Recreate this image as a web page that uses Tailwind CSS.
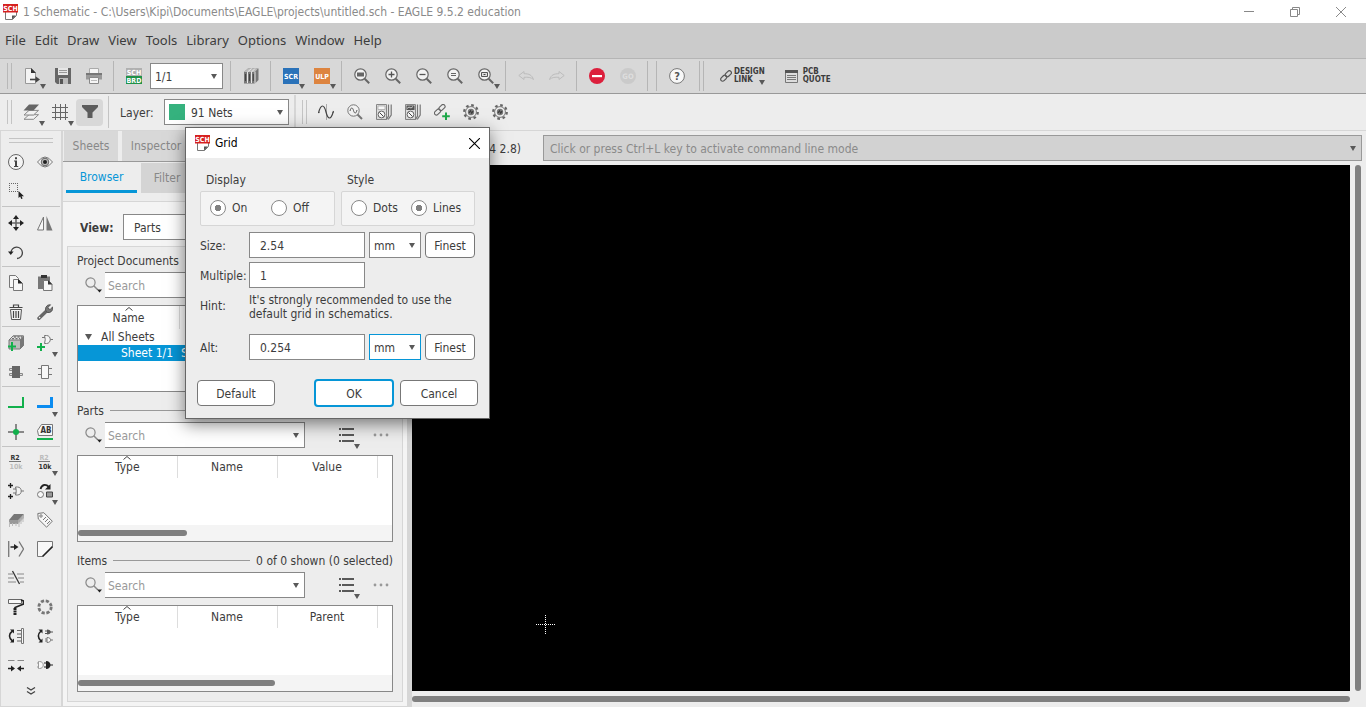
<!DOCTYPE html>
<html lang="en">
<head>
<meta charset="utf-8">
<title>1 Schematic - EAGLE 9.5.2 education</title>
<script src="https://cdn.jsdelivr.net/npm/@tailwindcss/browser@4"></script>
</head>
<body class="flex min-h-screen flex-col bg-white pb-[3px] font-['DejaVu_Sans_Condensed','DejaVu_Sans',sans-serif] text-xs text-[#3c3c3c]">

<!-- Icon library -->
<svg class="hidden" aria-hidden="true">
  <symbol id="arrow" viewBox="0 0 6 5"><path d="M0 0h6L3 5z" fill="#595959"/></symbol>
  <symbol id="sch" viewBox="0 0 16 16"><path d="M2.500 8v7.500h7l4-4V8" fill="#fff" stroke="#777"/><path d="M9 15.500v-4h4z" fill="#555"/><path d="M0 0h15v8.500H0z" fill="#d6201f"/><text x="7.500" y="6.800" text-anchor="middle" font-size="7" font-weight="bold" fill="#fff" font-family="DejaVu Sans Condensed">SCH</text></symbol>
  <symbol id="open" viewBox="0 0 16 16"><path d="M1.500.5h6l4 4v11h-10z" fill="#f4f4f4" stroke="#999"/><path d="M7 0v5h5z" fill="#333"/><path d="M6 11.500h7" fill="none" stroke="#444" stroke-width="1.600"/><path d="M11.500 8.300l4.500 3.200-4.500 3.200z" fill="#444"/></symbol>
  <symbol id="save" viewBox="0 0 16 16"><path d="M0 0h16v16H2l-2-2z" fill="#666"/><path d="M3 0h10v7H3z" fill="#e6e6e6"/><path d="M4 2.500h8M4 4.500h8" stroke="#999"/><path d="M4 10h9v6H4z" fill="#bbb"/><path d="M5 11h3v5H5z" fill="#555"/></symbol>
  <symbol id="print" viewBox="0 0 16 16"><path d="M3.500.5h9V6h-9z" fill="#f5f5f5" stroke="#aaa"/><path d="M0 5h16v6.500H0z" fill="#999"/><path d="M0 5h16v2H0z" fill="#777"/><path d="M3.500 9.500h9v6h-9z" fill="#f5f5f5" stroke="#888"/><path d="M5 12.500h6" stroke="#bbb"/></symbol>
  <symbol id="brd" viewBox="0 0 16 16"><path d="M0 0h16v8H0z" fill="#b0b0b0"/><path d="M0 8h16v8H0z" fill="#1f9248"/><g font-size="7" fill="#fff" text-anchor="middle" font-weight="bold" font-family="DejaVu Sans Condensed"><text x="8" y="6.800">SCH</text><text x="8" y="14.800">BRD</text></g></symbol>
  <symbol id="books" viewBox="0 0 16 16"><path d="M1 4l4-3.500h10.500V12L12 15.500H1z" fill="#777"/><path d="M1 4l4-3.500h10L12 4z" fill="#bbb"/><path d="M4.500 4v11M8.500 4v11M12 4v11.500M4.500 4l4-3.500M8.500 4l3.500-3.500" stroke="#e8e8e8"/><path d="M2.500 6v7M6.500 6v7M10.300 6v7" stroke="#444"/></symbol>
  <symbol id="scr" viewBox="0 0 16 16"><path d="M0 0h16v16H0z" fill="#2a72b9"/><text x="8" y="10.700" text-anchor="middle" font-size="7" font-weight="bold" fill="#fff" font-family="DejaVu Sans Condensed">SCR</text></symbol>
  <symbol id="ulp" viewBox="0 0 16 16"><path d="M0 0h16v16H0z" fill="#dd843f"/><text x="8" y="10.700" text-anchor="middle" font-size="7" font-weight="bold" fill="#fff" font-family="DejaVu Sans Condensed">ULP</text></symbol>
  <symbol id="lens" viewBox="0 0 16 16"><circle cx="6.500" cy="6.500" r="5.700" fill="#f2f2f2" stroke="#666" stroke-width="1.200"/><path d="M10.700 10.700l4.500 4.500" stroke="#666" stroke-width="2"/></symbol>
  <symbol id="undo" viewBox="0 0 16 16"><path d="M.8 7.500L6 3.500v2.200c5 0 8 1.300 9.500 5.800C13 9.300 10 9 6 9.300v2.200z" fill="none" stroke="#bcbcbc"/></symbol>
  <symbol id="stop" viewBox="0 0 16 16"><circle cx="8" cy="8" r="8" fill="#dc1f3c"/><path d="M3 7h10v2.200H3z" fill="#fff"/></symbol>
  <symbol id="go" viewBox="0 0 16 16"><circle cx="8" cy="8" r="8" fill="#cacaca"/><text x="8" y="10.700" text-anchor="middle" font-size="7.500" fill="#dedede" font-weight="bold" font-family="DejaVu Sans Condensed">GO</text></symbol>
  <symbol id="help" viewBox="0 0 16 16"><circle cx="8" cy="8" r="7.400" fill="#f8f8f8" stroke="#777"/><text x="8" y="12.200" text-anchor="middle" font-size="11" font-weight="bold" fill="#555" font-family="DejaVu Sans Condensed">?</text></symbol>
  <symbol id="link" viewBox="0 0 12 12"><g fill="none" stroke="#555" stroke-width="1.200"><rect x="4.800" y="1.800" width="7" height="4" rx="2" transform="rotate(-45 8.300 3.800)"/><rect x=".2" y="6.200" width="7" height="4" rx="2" transform="rotate(-45 3.700 8.200)"/></g></symbol>
  <symbol id="quote" viewBox="0 0 13 13"><path d="M.5.5h12v12H.5z" fill="#ddd" stroke="#777"/><path d="M0 0h13v3H0z" fill="#555"/><path d="M2 5.500h9M2 7.500h9M2 9.500h9" stroke="#777"/></symbol>
  <symbol id="layers" viewBox="0 0 16 16"><g fill="#f2f2f2" stroke="#888"><path d="M1 15.300l5-4.600h9.500l-5 4.600z"/><path d="M1 11l5-4.600h9.500l-5 4.600z"/></g><path d="M.5 6.500l5.500-6h10l-5.500 6z" fill="#666"/></symbol>
  <symbol id="grid" viewBox="0 0 16 16"><path d="M3.500 0v16M8.500 0v16M13.500 0v16M0 3.500h16M0 8.500h16M0 13.500h16" stroke="#666"/></symbol>
  <symbol id="funnel" viewBox="0 0 16 16"><path d="M0 1h16v2l-5.500 5.500V14h-5V8.500L0 3z" fill="#5c5c5c"/></symbol>
  <symbol id="wave" viewBox="0 0 16 16"><path d="M8.500 0v16M0 8.500h2M14 8.500h2" stroke="#aaa"/><path d="M.5 9C2 3 3 2 4.500 2c4 0 3 12 7 12 1.500 0 2.500-1.500 4-7" fill="none" stroke="#444" stroke-width="1.200"/></symbol>
  <symbol id="probe" viewBox="0 0 16 16"><circle cx="6.500" cy="6.500" r="5.700" fill="#f2f2f2" stroke="#777"/><path d="M10.500 10.500l4.500 4.500" stroke="#777" stroke-width="2"/><path d="M3 7c1-4 2.500-4 3.500-.5s2.500 3.500 3.500-.5" fill="none" stroke="#555"/></symbol>
  <symbol id="meter" viewBox="0 0 16 16"><path d="M.5.5h10v15H.5z" fill="#ddd" stroke="#888"/><path d="M2 2h7v3.500H2z" fill="#f8f8f8" stroke="#999" stroke-width=".6"/><circle cx="5.500" cy="10.500" r="3.400" fill="#f8f8f8" stroke="#666"/><path d="M3.500 8.500l4 4" stroke="#444"/><path d="M12.500.5V12l-2 3.500M15.200.5V11l-3 4.500" fill="none" stroke="#777" stroke-width="1.200"/></symbol>
  <symbol id="meter2" viewBox="0 0 16 16"><use href="#meter"/><path d="M1.500 1.500h8V6h-8z" fill="#555"/><path d="M2 4.500l2-1.500 2 1 2-1.500" stroke="#ccc" fill="none"/></symbol>
  <symbol id="linkadd" viewBox="0 0 16 16"><g fill="none" stroke="#666" stroke-width="1.100"><rect x="4.500" y="1.500" width="7" height="4" rx="2" transform="rotate(-45 8 3.500)"/><rect x="0" y="6" width="7" height="4" rx="2" transform="rotate(-45 3.500 8)"/></g><path d="M12 8.500V16M8.200 12.300h7.600" stroke="#1faa4b" stroke-width="2"/></symbol>
  <symbol id="gear" viewBox="0 0 16 16"><circle cx="8" cy="8" r="6.700" fill="none" stroke="#666" stroke-width="2.400" stroke-dasharray="2.600 2.660"/><circle cx="8" cy="8" r="5.400" fill="#eee" stroke="#777"/><circle cx="8" cy="8" r="3.200" fill="#777"/><path d="M6 9l1.500-2.500 1.200 3L10 7" stroke="#333" fill="none"/></symbol>

  <symbol id="info" viewBox="0 0 16 16"><circle cx="8" cy="8" r="7.500" fill="#f4f4f4" stroke="#666"/><path d="M7 3.200h2v2H7zM6 6.500h3V12h1.200v1H6v-1h1V7.500H6z" fill="#444"/></symbol>
  <symbol id="eye" viewBox="0 0 16 16"><path d="M.5 8Q8-2 15.500 8 8 18 .5 8z" fill="#f4f4f4" stroke="#777"/><circle cx="8" cy="8" r="3.800" fill="#bbb" stroke="#666"/><circle cx="8" cy="8" r="2" fill="#222"/></symbol>
  <symbol id="group" viewBox="0 0 16 16"><path d="M1 .5h9M1 8.500h9M1.500 0v9M9.500 0v9" stroke="#666" stroke-dasharray="1 1"/><path d="M10.500 8v7l1.700-1.400 1 2.400 1.400-.6-1-2.200H16z" fill="#222"/></symbol>
  <symbol id="move" viewBox="0 0 16 16"><path d="M8 2v12M2 8h12" stroke="#666" stroke-width="1.600"/><path d="M8 0l3 4H5zM8 16l3-4H5zM0 8l4-3v6zM16 8l-4-3v6z" fill="#222"/></symbol>
  <symbol id="mirror" viewBox="0 0 16 16"><path d="M6.500 2v13h-6z" fill="#f6f6f6" stroke="#777"/><path d="M9.500 1l6 14.500h-6z" fill="#777"/></symbol>
  <symbol id="rotate" viewBox="0 0 16 16"><path d="M3 9a5.700 5.700 0 1 1 6 5.500" fill="none" stroke="#444" stroke-width="1.300"/><path d="M0 7.500h5.600L2.800 11z" fill="#222"/></symbol>
  <symbol id="copy" viewBox="0 0 16 16"><g fill="#f6f6f6" stroke="#777"><path d="M1.500.5h6l3 3v9h-9z"/><path d="M5.500 4.500h5l4 4v7h-9z"/></g><path d="M10 4v4.500h4.800z" fill="#222"/></symbol>
  <symbol id="paste" viewBox="0 0 16 16"><path d="M1 1.500h12V14H1z" fill="#777"/><path d="M4 0h6v3H4z" fill="#333"/><path d="M6.500 5.500h5l3.500 4v6H6.500z" fill="#f6f6f6" stroke="#777"/><path d="M11 5v4.500h4.500z" fill="#333"/></symbol>
  <symbol id="trash" viewBox="0 0 16 16"><path d="M2.500 5.500h11l-1 10h-9z" fill="#f4f4f4" stroke="#555"/><path d="M1.500 3.500h13M5.500 3V1h5v2M5.500 7v7M8 7v7M10.500 7v7" stroke="#444" fill="none" stroke-width="1.200"/></symbol>
  <symbol id="wrench" viewBox="0 0 16 16"><path d="M2 14.200l7-6.700" stroke="#666" stroke-width="3.400" stroke-linecap="round"/><path d="M13.500.8L11 3.300l.5 1.700 1.700.4 2.400-2.400A4.300 4.300 0 0 1 10 8.300 4.300 4.300 0 0 1 13.500.8z" fill="#777" stroke="#555"/><circle cx="2.600" cy="13.600" r=".8" fill="#eee"/></symbol>
  <symbol id="addpart" viewBox="0 0 16 16"><path d="M1 5l4-4h10.500v9.500L12 14H1z" fill="#bdbdbd" stroke="#777"/><path d="M12 5l3.500-4v9.500L12 14z" fill="#777"/><path d="M1 5l4-4h10.500L12 5z" fill="#e2e2e2" stroke="#777"/><path d="M4 3.700h8M6 2h8" stroke="#555" stroke-dasharray="2 1.500"/><path d="M4 7v9M0 11.500h8" stroke="#12b04c" stroke-width="2"/></symbol>
  <symbol id="addgate" viewBox="0 0 16 16"><path d="M7.500.5h2c5 0 5 8 0 8h-2q1.500-4 0-8zM5 2.500h3M13.300 4.500H16" fill="#f4f4f4" stroke="#777"/><path d="M4 8v8M0 12h8" stroke="#12b04c" stroke-width="2"/></symbol>
  <symbol id="chipdark" viewBox="0 0 16 16"><path d="M1.500 4.500h3v2h-3zM1.500 9.500h3v2h-3zM11.500 9.500h3v2h-3z" fill="#ddd" stroke="#888"/><path d="M4 2h8v12H4z" fill="#666"/></symbol>
  <symbol id="chip" viewBox="0 0 16 16"><path d="M1 4.500h3M1 10.500h3M12 4.500h3M12 10.500h3" stroke="#777"/><path d="M4.500 1.500h7v13h-7z" fill="#f8f8f8" stroke="#777"/></symbol>
  <symbol id="net" viewBox="0 0 16 16"><path d="M0 12h15V2" fill="none" stroke="#12b04c" stroke-width="2"/></symbol>
  <symbol id="bus" viewBox="0 0 16 16"><path d="M0 11.500h14.500V2" fill="none" stroke="#0b8cf0" stroke-width="3"/></symbol>
  <symbol id="junction" viewBox="0 0 16 16"><path d="M8 0v16M0 8h16" stroke="#888" stroke-width="2"/><circle cx="8" cy="8" r="3" fill="#12b04c"/></symbol>
  <symbol id="label" viewBox="0 0 16 16"><path d="M.5 6.500l4-6h11v11h-14z" fill="#f8f8f8" stroke="#777"/><path d="M0 15h16" stroke="#12b04c" stroke-width="2"/><text x="9" y="8.800" text-anchor="middle" font-size="8" font-weight="bold" fill="#333" font-family="DejaVu Sans Condensed">AB</text></symbol>
  <symbol id="gateadd" viewBox="0 0 16 16"><path d="M2.500 0v5M0 2.500h5M2.500 11v5M0 13.500h5" stroke="#222" stroke-width="1.300"/><path d="M7.500 4h2c5 0 5 8 0 8h-2q1.500-4 0-8zM5 6h3.500M5 10h3.500M13.300 8H16" fill="#f4f4f4" stroke="#777"/></symbol>
  <symbol id="replace" viewBox="0 0 16 16"><path d="M3.500 6C5 1 9 1 12 4" fill="none" stroke="#222" stroke-width="1.800"/><path d="M13.500 1v5.500H8z" fill="#222"/><circle cx="3.500" cy="11.500" r="3" fill="#f8f8f8" stroke="#777"/><path d="M9.500 9h6v5h-6z" fill="#999" stroke="#444"/></symbol>
  <symbol id="ic" viewBox="0 0 16 16"><path d="M1 8l5-6h10l-5 6z" fill="#777"/><path d="M1 8h9v4H1z" fill="#999"/><path d="M10 8l6-6v4l-6 6z" fill="#aaa"/><path d="M1.500 10v5M4.500 11v3M8 11v3M11 10v5M13 7v5M15 4v6" stroke="#bbb"/></symbol>
  <symbol id="tag" viewBox="0 0 16 16"><path d="M.8 1.500l6-.8 8.500 8.500-5.700 6L1.300 7z" fill="#f6f6f6" stroke="#777"/><circle cx="4" cy="4" r="1.200" fill="none" stroke="#777"/><path d="M6 8l3-3M8 10l3-3M10 12l3-3" stroke="#777"/></symbol>
  <symbol id="split" viewBox="0 0 16 16"><path d="M.7 0v16" stroke="#777" stroke-width="1.300"/><path d="M2.500 6h4" stroke="#333" stroke-width="1.600"/><path d="M6 3l4.500 3L6 9z" fill="#222"/><path d="M11 .5L15.500 8 11 15.500" fill="none" stroke="#777" stroke-width="1.300"/></symbol>
  <symbol id="miter" viewBox="0 0 16 16"><path d="M.5.5h15v5l-10 10h-5z" fill="#f8f8f8" stroke="#777"/><path d="M15.500 5.500l-10 10" stroke="#222" stroke-width="1.600"/></symbol>
  <symbol id="cut" viewBox="0 0 16 16"><path d="M0 4h5M9 4h7M0 8h6M10 8h6M0 12h8M12 12h4" stroke="#888"/><path d="M4.500 1l7 13" stroke="#333" stroke-width="1.300"/></symbol>
  <symbol id="paint" viewBox="0 0 16 16"><path d="M.5.500h13v4H.5z" fill="#f8f8f8" stroke="#666"/><path d="M13 1l2.500 1v3L7 8.500V10" fill="none" stroke="#222" stroke-width="1.600"/><path d="M7 9v7" stroke="#222" stroke-width="3" stroke-dasharray="2 .5"/></symbol>
  <symbol id="ring" viewBox="0 0 16 16"><circle cx="8" cy="8" r="6.200" fill="none" stroke="#777" stroke-width="2.800" stroke-dasharray="3.200 1.670"/></symbol>
  <symbol id="pinswap" viewBox="0 0 16 16"><path d="M4.500 3C.5 6 .5 10 4.500 13" fill="none" stroke="#222" stroke-width="1.600"/><path d="M2 1.500h4v4zM2 14.500h4v-4z" fill="#222"/><path d="M9 2.500h4M9 6h4M9 9.500h4M9 13h4" stroke="#666"/><path d="M13.500.5h2v15h-2z" fill="#f8f8f8" stroke="#777"/></symbol>
  <symbol id="gateswap" viewBox="0 0 16 16"><path d="M4 3C.5 6 .5 10 4 13" fill="none" stroke="#222" stroke-width="1.600"/><path d="M1.500 1.500h4v4zM1.500 14.500h4v-4z" fill="#222"/><path d="M10 1.500c5 0 5 5 0 5z" fill="#555"/><path d="M8 3h3M8 5.500h3M13 4h3" stroke="#555"/><path d="M10 9.500c5 0 5 5 0 5zM8 11h2M8 13h2M14 12h2" fill="#f8f8f8" stroke="#777"/></symbol>
  <symbol id="gap" viewBox="0 0 16 16"><path d="M0 3.500h6.500M9.500 3.500H16" stroke="#888"/><path d="M0 11.500h4M12 11.500h4" stroke="#222" stroke-width="1.600"/><path d="M3 8.500l4 3-4 3zM13 8.500l-4 3 4 3z" fill="#222"/></symbol>
  <symbol id="invoke" viewBox="0 0 16 16"><path d="M1.500 4.500h1c5 0 5 7 0 7h-1zM0 6h2M0 10h2" fill="#f8f8f8" stroke="#999"/><path d="M9 4c6 0 6 8 0 8z" fill="#222"/><path d="M7 6h3M7 10h3M13 8h3" stroke="#222"/></symbol>
  <symbol id="more" viewBox="0 0 10 8"><path d="M1 .5l4 2.500 4-2.500M1 4.500L5 7l4-2.500" fill="none" stroke="#444" stroke-width="1.300"/></symbol>
  <symbol id="search" viewBox="0 0 18 16"><circle cx="5.500" cy="5.500" r="4.600" fill="none" stroke="#888" stroke-width="1.200"/><path d="M8.700 8.700l4 4" stroke="#888" stroke-width="1.500"/><path d="M12 12.500h5l-2.500 3z" fill="#222"/></symbol>
  <symbol id="list" viewBox="0 0 16 14"><path d="M0 1h2M3 1h12M0 7h2M3 7h12M0 13h2M3 13h12" stroke="#595959" stroke-width="2"/></symbol>
  <symbol id="dots" viewBox="0 0 16 4"><circle cx="2" cy="2" r="1.400" fill="#999"/><circle cx="8" cy="2" r="1.400" fill="#999"/><circle cx="14" cy="2" r="1.400" fill="#999"/></symbol>
  <symbol id="sortup" viewBox="0 0 8 4"><path d="M.5 3.500L4 .5l3.500 3" fill="none" stroke="#444"/></symbol>
  <symbol id="cross" viewBox="0 0 10 10"><path d="M0 0l10 10M10 0L0 10" stroke="currentColor"/></symbol>
</svg>

<!-- Title bar -->
<header class="flex h-[23px] items-center bg-white pl-[3px] text-[#8a8a8a]">
  <svg class="size-4"><use href="#sch"/></svg>
  <h1 class="ml-1 flex-1 whitespace-nowrap">1 Schematic - C:\Users\Kipi\Documents\EAGLE\projects\untitled.sch - EAGLE 9.5.2 education</h1>
  <div class="flex pr-px">
    <button class="grid h-5 w-[46px] place-items-center" aria-label="Minimize"><svg class="h-px w-2.5 bg-[#888]"></svg></button>
    <button class="grid h-5 w-[45px] place-items-center" aria-label="Restore"><svg class="size-[10px]" viewBox="0 0 10 10"><path d="M2.500 2V.5h7v7H8M.5 2.500h7v7h-7z" fill="none" stroke="#888"/></svg></button>
    <button class="grid h-5 w-[48px] place-items-center" aria-label="Close"><svg class="size-[10px]"><use href="#cross"/></svg></button>
  </div>
</header>

<!-- Menu -->
<nav class="flex h-9 items-center gap-[9px] border-b border-[#b5b5b5] bg-[#cbcbcb] pl-[5px] font-['Noto_Sans',sans-serif] text-[13px]">
  <a href="#">File</a><a href="#">Edit</a><a href="#">Draw</a><a href="#">View</a><a href="#">Tools</a><a href="#">Library</a><a href="#">Options</a><a href="#">Window</a><a href="#">Help</a>
</nav>

<!-- Main toolbar -->
<div class="flex h-[35px] items-stretch border-b border-[#999] bg-[#d8d8d8] pl-[7px]">
  <div class="my-1 mr-1 w-[5px] border-x border-[#b8b8b8]"></div>
  <button class="relative grid w-[31px] place-items-center" aria-label="Open"><svg class="size-4"><use href="#open"/></svg><svg class="absolute right-px bottom-1 h-[5px] w-1.5"><use href="#arrow"/></svg></button>
  <button class="grid w-[31px] place-items-center" aria-label="Save"><svg class="size-4"><use href="#save"/></svg></button>
  <button class="grid w-[31px] place-items-center" aria-label="Print"><svg class="size-4"><use href="#print"/></svg></button>
  <div class="mx-1 my-0.5 w-px bg-[#b5b5b5]"></div>
  <button class="grid w-[31px] place-items-center" aria-label="Switch to board"><svg class="size-4"><use href="#brd"/></svg></button>
  <div class="relative my-auto ml-px h-[26px] w-[73px]">
    <select aria-label="Sheet" class="h-full w-full appearance-none border border-[#888] bg-white pt-0.5 pl-1"><option>1/1</option></select>
    <svg class="pointer-events-none absolute top-[11px] right-1.5 h-[5px] w-1.5"><use href="#arrow"/></svg>
  </div>
  <div class="my-0.5 mr-1 ml-[7px] w-px bg-[#b5b5b5]"></div>
  <button class="grid w-[31px] place-items-center" aria-label="Library manager"><svg class="size-4"><use href="#books"/></svg></button>
  <div class="mx-1 my-0.5 w-px bg-[#b5b5b5]"></div>
  <button class="relative grid w-[31px] place-items-center" aria-label="Run script"><svg class="size-4"><use href="#scr"/></svg><svg class="absolute right-px bottom-1 h-[5px] w-1.5"><use href="#arrow"/></svg></button>
  <button class="relative grid w-[31px] place-items-center" aria-label="Run ULP"><svg class="size-4"><use href="#ulp"/></svg><svg class="absolute right-px bottom-1 h-[5px] w-1.5"><use href="#arrow"/></svg></button>
  <div class="mx-1 my-0.5 w-px bg-[#b5b5b5]"></div>
  <button class="grid w-[31px] place-items-center" aria-label="Zoom to fit"><svg class="size-4" viewBox="0 0 16 16"><use href="#lens"/><path d="M3 4.500h7v4H3z" fill="#666"/></svg></button>
  <button class="grid w-[31px] place-items-center" aria-label="Zoom in"><svg class="size-4" viewBox="0 0 16 16"><use href="#lens"/><path d="M3.500 6.500h6M6.500 3.500v6" stroke="#555" stroke-width="1.300"/></svg></button>
  <button class="grid w-[31px] place-items-center" aria-label="Zoom out"><svg class="size-4" viewBox="0 0 16 16"><use href="#lens"/><path d="M3.500 6.500h6" stroke="#555" stroke-width="1.300"/></svg></button>
  <button class="grid w-[31px] place-items-center" aria-label="Redraw"><svg class="size-4" viewBox="0 0 16 16"><use href="#lens"/><path d="M4 5.500h5M4 7.500h5" stroke="#666"/></svg></button>
  <button class="relative grid w-[31px] place-items-center" aria-label="Zoom select"><svg class="size-4" viewBox="0 0 16 16"><use href="#lens"/><path d="M3.500 4.500h6v4h-6z" fill="#ddd" stroke="#555"/><path d="M5.500 6.500h2" stroke="#444"/></svg><svg class="absolute right-px bottom-1 h-[5px] w-1.5"><use href="#arrow"/></svg></button>
  <div class="mx-1 my-0.5 w-px bg-[#b5b5b5]"></div>
  <button class="grid w-[31px] place-items-center" aria-label="Undo"><svg class="size-4"><use href="#undo"/></svg></button>
  <button class="grid w-[31px] place-items-center" aria-label="Redo"><svg class="size-4 -scale-x-100"><use href="#undo"/></svg></button>
  <div class="mx-1 my-0.5 w-px bg-[#b5b5b5]"></div>
  <button class="grid w-[31px] place-items-center" aria-label="Stop"><svg class="size-4"><use href="#stop"/></svg></button>
  <button class="grid w-[31px] place-items-center" aria-label="Go"><svg class="size-4"><use href="#go"/></svg></button>
  <div class="mx-1 my-0.5 w-2.5 border-x border-[#b5b5b5]"></div>
  <button class="grid w-[31px] place-items-center" aria-label="Help"><svg class="size-4"><use href="#help"/></svg></button>
  <div class="my-0.5 ml-[7px] w-[5px] border-x border-[#b5b5b5]"></div>
  <button class="relative ml-4 flex items-center gap-0.5 text-left text-[8px] leading-[8px] font-bold"><svg class="size-3"><use href="#link"/></svg><span class="flex flex-col"><span>DESIGN</span><span>LINK</span></span><svg class="absolute right-0 bottom-2 h-[5px] w-1.5"><use href="#arrow"/></svg></button>
  <button class="ml-5 flex items-center gap-[5px] text-left text-[8px] leading-[8px] font-bold"><svg class="size-[13px]"><use href="#quote"/></svg><span class="flex flex-col"><span>PCB</span><span>QUOTE</span></span></button>
</div>

<!-- Parameter toolbar -->
<div class="flex h-[37px] items-stretch border-b border-[#d6d6d6] bg-[#ededed] pl-[7px]">
  <div class="my-1.5 mr-1 w-[5px] border-x border-[#c4c4c4]"></div>
  <button class="relative grid w-[29px] place-items-center" aria-label="Layer settings"><svg class="size-4"><use href="#layers"/></svg><svg class="absolute right-0 bottom-1 h-[5px] w-1.5"><use href="#arrow"/></svg></button>
  <button class="relative grid w-[29px] place-items-center" aria-label="Grid"><svg class="size-4"><use href="#grid"/></svg><svg class="absolute right-0 bottom-1 h-[5px] w-1.5"><use href="#arrow"/></svg></button>
  <button class="my-auto ml-0.5 grid size-[27px] place-items-center rounded-sm bg-[#d8d8d8]" aria-label="Selection filter"><svg class="size-4"><use href="#funnel"/></svg></button>
  <div class="mx-[5px] my-0.5 w-px bg-[#c4c4c4]"></div>
  <label for="layer" class="my-auto ml-1.5 w-11 pt-0.5">Layer:</label>
  <div class="relative my-auto h-[26px] w-[125px]">
    <select id="layer" class="h-full w-full appearance-none border border-[#888] bg-white pt-0.5 pl-[26px]"><option>91 Nets</option></select>
    <span class="pointer-events-none absolute top-[5px] left-[5px] size-4 bg-[#35b27e]"></span>
    <svg class="pointer-events-none absolute top-[11px] right-1.5 h-[5px] w-1.5"><use href="#arrow"/></svg>
  </div>
  <div class="mt-px mr-[6px] ml-[5px] w-0.5 bg-[#d6d6d6]"></div>
  <div class="my-1.5 mr-1 w-[5px] border-x border-[#c4c4c4]"></div>
  <button class="grid w-[29px] place-items-center" aria-label="Source setup"><svg class="size-4"><use href="#wave"/></svg></button>
  <button class="grid w-[29px] place-items-center" aria-label="Add probe"><svg class="size-4"><use href="#probe"/></svg></button>
  <button class="grid w-[29px] place-items-center" aria-label="Voltage probe"><svg class="size-4"><use href="#meter"/></svg></button>
  <button class="grid w-[29px] place-items-center" aria-label="Phase probe"><svg class="size-4"><use href="#meter2"/></svg></button>
  <button class="grid w-[29px] place-items-center" aria-label="Map model"><svg class="size-4"><use href="#linkadd"/></svg></button>
  <button class="grid w-[29px] place-items-center" aria-label="Add model"><svg class="size-4"><use href="#gear"/></svg></button>
  <button class="grid w-[29px] place-items-center" aria-label="Simulate"><svg class="size-4"><use href="#gear"/></svg></button>
</div>

<main class="flex flex-1 bg-[#ededed]">
  <!-- Tool palette -->
  <aside class="flex w-[63px] shrink-0 flex-col border-r-2 border-b border-l border-[#d6d6d6]">
    <div class="mx-2 mt-[7px] mb-[4px] h-[5px] border-y border-[#c4c4c4]"></div>
    <div class="grid auto-rows-[29px] grid-cols-2 pr-0.5">
      <button class="grid place-items-center" aria-label="Info"><svg class="size-4"><use href="#info"/></svg></button>
      <button class="grid place-items-center" aria-label="Show"><svg class="size-4"><use href="#eye"/></svg></button>
      <button class="grid place-items-center" aria-label="Group"><svg class="size-4"><use href="#group"/></svg></button>
    </div>
    <div class="mx-px my-px h-px bg-[#c4c4c4]"></div>
    <div class="grid auto-rows-[29px] grid-cols-2 pr-0.5">
      <button class="grid place-items-center" aria-label="Move"><svg class="size-4"><use href="#move"/></svg></button>
      <button class="grid place-items-center" aria-label="Mirror"><svg class="size-4"><use href="#mirror"/></svg></button>
      <button class="grid place-items-center" aria-label="Rotate"><svg class="size-4"><use href="#rotate"/></svg></button>
    </div>
    <div class="mx-px mb-px h-px bg-[#c4c4c4]"></div>
    <div class="grid auto-rows-[29px] grid-cols-2 pr-0.5">
      <button class="grid place-items-center" aria-label="Copy"><svg class="size-4"><use href="#copy"/></svg></button>
      <button class="grid place-items-center" aria-label="Paste"><svg class="size-4"><use href="#paste"/></svg></button>
      <button class="grid place-items-center" aria-label="Delete"><svg class="size-4"><use href="#trash"/></svg></button>
      <button class="grid place-items-center" aria-label="Change"><svg class="size-4"><use href="#wrench"/></svg></button>
    </div>
    <div class="mx-px mb-px h-px bg-[#c4c4c4]"></div>
    <div class="grid auto-rows-[29px] grid-cols-2 pr-0.5">
      <button class="grid place-items-center" aria-label="Add part"><svg class="size-4"><use href="#addpart"/></svg></button>
      <button class="relative grid place-items-center" aria-label="Add gate"><svg class="size-4"><use href="#addgate"/></svg><svg class="absolute right-px bottom-0 h-[5px] w-1.5"><use href="#arrow"/></svg></button>
      <button class="grid place-items-center" aria-label="Replace"><svg class="size-4"><use href="#chipdark"/></svg></button>
      <button class="grid place-items-center" aria-label="Module"><svg class="size-4"><use href="#chip"/></svg></button>
    </div>
    <div class="mx-px mb-px h-px bg-[#c4c4c4]"></div>
    <div class="grid auto-rows-[29px] grid-cols-2 pr-0.5">
      <button class="grid place-items-center" aria-label="Net"><svg class="size-4"><use href="#net"/></svg></button>
      <button class="relative grid place-items-center" aria-label="Bus"><svg class="size-4"><use href="#bus"/></svg><svg class="absolute right-px bottom-0 h-[5px] w-1.5"><use href="#arrow"/></svg></button>
      <button class="grid place-items-center" aria-label="Junction"><svg class="size-4"><use href="#junction"/></svg></button>
      <button class="grid place-items-center" aria-label="Label"><svg class="size-4"><use href="#label"/></svg></button>
    </div>
    <div class="mx-px h-px bg-[#c4c4c4]"></div>
    <div class="grid auto-rows-[29px] grid-cols-2 pr-0.5">
      <button class="grid place-items-center" aria-label="Name"><svg class="size-4" viewBox="0 0 16 16" font-size="7" font-weight="bold" text-anchor="middle"><text x="7" y="6" fill="#333">R2</text><path d="M1 7.500h12" stroke="#777"/><text x="8" y="14.500" fill="#bbb">10k</text></svg></button>
      <button class="relative grid place-items-center" aria-label="Value"><svg class="size-4" viewBox="0 0 16 16" font-size="7" font-weight="bold" text-anchor="middle"><text x="7" y="6" fill="#bbb">R2</text><path d="M1 7.500h12" stroke="#777"/><text x="8" y="14.500" fill="#333">10k</text></svg><svg class="absolute right-px bottom-0 h-[5px] w-1.5"><use href="#arrow"/></svg></button>
      <button class="grid place-items-center" aria-label="Gate add"><svg class="size-4"><use href="#gateadd"/></svg></button>
      <button class="relative grid place-items-center" aria-label="Technology"><svg class="size-4"><use href="#replace"/></svg><svg class="absolute right-px bottom-0 h-[5px] w-1.5"><use href="#arrow"/></svg></button>
      <button class="grid place-items-center" aria-label="Package"><svg class="size-4"><use href="#ic"/></svg></button>
      <button class="grid place-items-center" aria-label="Attribute"><svg class="size-4"><use href="#tag"/></svg></button>
      <button class="grid place-items-center" aria-label="Split"><svg class="size-4"><use href="#split"/></svg></button>
      <button class="grid place-items-center" aria-label="Miter"><svg class="size-4"><use href="#miter"/></svg></button>
      <button class="col-span-2 grid w-[29px] place-items-center" aria-label="Slice"><svg class="size-4"><use href="#cut"/></svg></button>
      <button class="grid place-items-center" aria-label="Paint roller"><svg class="size-4"><use href="#paint"/></svg></button>
      <button class="grid place-items-center" aria-label="Optimize"><svg class="size-4"><use href="#ring"/></svg></button>
      <button class="grid place-items-center" aria-label="Pin swap"><svg class="size-4"><use href="#pinswap"/></svg></button>
      <button class="grid place-items-center" aria-label="Gate swap"><svg class="size-4"><use href="#gateswap"/></svg></button>
      <button class="grid place-items-center" aria-label="Break"><svg class="size-4"><use href="#gap"/></svg></button>
      <button class="grid place-items-center" aria-label="Invoke"><svg class="size-4"><use href="#invoke"/></svg></button>
    </div>
    <button class="grid h-6 place-items-center" aria-label="More tools"><svg class="h-2 w-2.5"><use href="#more"/></svg></button>
  </aside>

  <!-- Design manager -->
  <section class="flex w-[349px] shrink-0 flex-col border-r-[5px] border-[#d6d6d6]">
    <div class="flex h-[31px] gap-1 border-b border-[#999] pl-px text-[#888]">
      <button class="w-[54px] bg-[#d8d8d8] pb-px">Sheets</button>
      <button class="w-[68px] bg-[#d8d8d8] pb-px">Inspector</button>
    </div>
    <div class="flex h-[31px] gap-1 pt-px pl-[3px]">
      <button class="w-[71px] border-b-[3px] border-[#0696d7] pt-px text-[#0696d7]">Browser</button>
      <button class="w-[52px] bg-[#d4d4d4] pb-px text-[#888]">Filter</button>
    </div>
    <div class="mt-2 flex flex-1 flex-col border-t border-b border-[#d6d6d6] bg-[#f4f4f4] px-1 pt-3 pb-1">
      <div class="flex h-[26px] items-center">
        <label for="view" class="w-14 pt-0.5 pl-[13px] font-bold">View:</label>
        <div class="relative h-full w-[180px]">
          <select id="view" class="h-full w-full appearance-none border border-[#888] bg-white pt-0.5 pl-[10px]"><option>Parts</option></select>
          <svg class="absolute top-[11px] right-1.5 h-[5px] w-1.5"><use href="#arrow"/></svg>
        </div>
      </div>
      <div class="mt-1.5 flex flex-1 flex-col gap-1.5 border border-[#d6d6d6] bg-[#ededed] px-[9px] pt-px">
        <section>
          <h2 class="flex h-6 items-center pt-0.5">Project Documents</h2>
          <div class="flex h-[26px] items-center">
            <svg class="mx-2 h-4 w-[18px] shrink-0"><use href="#search"/></svg>
            <input aria-label="Search documents" placeholder="Search" class="-ml-1.5 h-full w-[200px] border border-l-0 border-[#888] bg-white pt-0.5 pl-[3px] placeholder:text-[#999]">
          </div>
          <div class="mt-[7px] h-[87px] border border-[#888] bg-white">
            <div class="flex h-[23px]">
              <div class="flex w-[102px] flex-col items-center border-r border-[#ddd] leading-[14px]"><svg class="mt-px h-1 w-2"><use href="#sortup"/></svg>Name</div>
            </div>
            <ul class="leading-4">
              <li class="flex items-center pl-[7px]"><svg class="mr-[9px] h-1.5 w-[7px]" viewBox="0 0 6 5"><use href="#arrow"/></svg>All Sheets</li>
              <li class="flex gap-2 bg-[#0696d7] pl-[43px] text-white"><span>Sheet 1/1</span><span class="w-2 overflow-hidden">S</span></li>
            </ul>
          </div>
        </section>
        <section>
          <h2 class="flex h-6 items-center gap-1.5"><span class="pt-0.5">Parts</span><span class="h-px flex-1 bg-[#999]"></span></h2>
          <div class="flex h-[26px] items-center">
            <svg class="mx-2 h-4 w-[18px] shrink-0"><use href="#search"/></svg>
            <div class="relative -ml-1.5 h-full w-[200px]">
              <input aria-label="Search parts" placeholder="Search" class="h-full w-full border border-l-0 border-[#888] bg-white pt-0.5 pl-[3px] placeholder:text-[#999]">
              <svg class="absolute top-[11px] right-1.5 h-[5px] w-1.5"><use href="#arrow"/></svg>
            </div>
            <button class="relative ml-[34px] h-[26px] w-[21px]" aria-label="Columns"><svg class="absolute top-1.5 left-0 h-3.5 w-4"><use href="#list"/></svg><svg class="absolute right-0 bottom-[-1px] h-[5px] w-1.5"><use href="#arrow"/></svg></button>
            <button class="ml-[13px] grid h-[26px] w-4 place-items-center" aria-label="More"><svg class="h-1 w-4"><use href="#dots"/></svg></button>
          </div>
          <div class="mt-[7px] flex h-[87px] flex-col justify-between border border-[#888] bg-white">
            <table class="w-full table-fixed"><thead><tr class="h-[22px] leading-[14px]">
              <th class="w-[99px] border-r border-[#ddd] p-0 align-top font-normal"><span class="flex flex-col items-center"><svg class="h-1 w-2"><use href="#sortup"/></svg>Type</span></th>
              <th class="w-[100px] border-r border-[#ddd] p-0 font-normal">Name</th>
              <th class="w-[100px] border-r border-[#ddd] p-0 font-normal">Value</th><td></td>
            </tr></thead></table>
            <div class="flex h-4 items-center bg-[#f4f4f4]"><div class="h-1.5 w-[109px] rounded-full bg-[#808080]"></div></div>
          </div>
        </section>
        <section>
          <h2 class="flex h-6 items-center gap-1.5"><span class="pt-0.5">Items</span><span class="h-px flex-1 bg-[#999]"></span><span class="pt-0.5">0 of 0 shown (0 selected)</span></h2>
          <div class="flex h-[26px] items-center">
            <svg class="mx-2 h-4 w-[18px] shrink-0"><use href="#search"/></svg>
            <div class="relative -ml-1.5 h-full w-[200px]">
              <input aria-label="Search items" placeholder="Search" class="h-full w-full border border-l-0 border-[#888] bg-white pt-0.5 pl-[3px] placeholder:text-[#999]">
              <svg class="absolute top-[11px] right-1.5 h-[5px] w-1.5"><use href="#arrow"/></svg>
            </div>
            <button class="relative ml-[34px] h-[26px] w-[21px]" aria-label="Columns"><svg class="absolute top-1.5 left-0 h-3.5 w-4"><use href="#list"/></svg><svg class="absolute right-0 bottom-[-1px] h-[5px] w-1.5"><use href="#arrow"/></svg></button>
            <button class="ml-[13px] grid h-[26px] w-4 place-items-center" aria-label="More"><svg class="h-1 w-4"><use href="#dots"/></svg></button>
          </div>
          <div class="mt-[7px] flex h-[87px] flex-col justify-between border border-[#888] bg-white">
            <table class="w-full table-fixed"><thead><tr class="h-[22px] leading-[14px]">
              <th class="w-[99px] border-r border-[#ddd] p-0 align-top font-normal"><span class="flex flex-col items-center"><svg class="h-1 w-2"><use href="#sortup"/></svg>Type</span></th>
              <th class="w-[100px] border-r border-[#ddd] p-0 font-normal">Name</th>
              <th class="w-[100px] border-r border-[#ddd] p-0 font-normal">Parent</th><td></td>
            </tr></thead></table>
            <div class="flex h-4 items-center bg-[#f4f4f4]"><div class="h-1.5 w-[197px] rounded-full bg-[#808080]"></div></div>
          </div>
        </section>
      </div>
    </div>
  </section>

  <!-- Drawing area -->
  <section class="flex min-w-0 flex-1 flex-col">
    <div class="flex h-[34px] items-center pr-1">
      <span class="w-[131px] shrink-0 pt-0.5 pr-[22px] text-right">(1.4 2.8)</span>
      <div class="relative h-[26px] flex-1">
        <input aria-label="Command line" placeholder="Click or press Ctrl+L key to activate command line mode" class="h-full w-full border border-[#999] bg-[#d2d2d2] pt-0.5 pl-1.5 placeholder:text-[#8a8a8a]">
        <svg class="absolute top-[11px] right-1.5 h-[5px] w-1.5"><use href="#arrow"/></svg>
      </div>
    </div>
    <div class="flex flex-1">
      <div class="relative flex-1 bg-black">
        <svg class="absolute bottom-[57px] left-[124px] size-[19px]" viewBox="0 0 19 19"><path d="M0 9.500h19M9.500 0v19" stroke="#fff" stroke-dasharray="1 1"/></svg>
      </div>
      <div class="flex w-4 justify-center pr-px"><div class="w-1.5 rounded-full bg-[#808080]"></div></div>
    </div>
    <div class="flex h-4 items-center pr-4"><div class="h-1.5 flex-1 rounded-full bg-[#808080]"></div></div>
  </section>
</main>

<!-- Grid dialog -->
<div role="dialog" aria-labelledby="grid-title" class="absolute top-[127px] left-[185px] w-[305px] border border-[#666] bg-[#ededed] shadow-[0_5px_16px_rgba(0,0,0,0.5)]">
  <div class="flex h-[30px] items-center bg-white pr-[9px] pl-[9px] text-black">
    <svg class="size-4"><use href="#sch"/></svg>
    <h2 id="grid-title" class="ml-1 flex-1">Grid</h2>
    <button aria-label="Close dialog"><svg class="size-[11px]" viewBox="0 0 10 10"><use href="#cross"/></svg></button>
  </div>
  <form class="px-[14px] pt-[14px] pb-[11px]">
    <div class="grid grid-cols-[135px_134px] gap-1.5">
      <fieldset>
        <legend class="h-[19px] pl-1.5 leading-4">Display</legend>
        <div class="flex h-[35px] items-center rounded-xs border border-[#d6d6d6] bg-[#f4f4f4] pb-px pl-[9px]">
          <label class="flex w-[61px] items-center gap-1.5"><input type="radio" name="display" checked class="size-4 appearance-none rounded-full border border-[#888] bg-white checked:bg-[radial-gradient(#808080_3px,#fff_3.5px)]">On</label>
          <label class="flex items-center gap-1.5"><input type="radio" name="display" class="size-4 appearance-none rounded-full border border-[#888] bg-white checked:bg-[radial-gradient(#808080_3px,#fff_3.5px)]">Off</label>
        </div>
      </fieldset>
      <fieldset>
        <legend class="h-[19px] pl-1.5 leading-4">Style</legend>
        <div class="flex h-[35px] items-center rounded-xs border border-[#d6d6d6] bg-[#f4f4f4] pb-px pl-[9px]">
          <label class="flex w-[60px] items-center gap-1.5"><input type="radio" name="style" class="size-4 appearance-none rounded-full border border-[#888] bg-white checked:bg-[radial-gradient(#808080_3px,#fff_3.5px)]">Dots</label>
          <label class="flex items-center gap-1.5"><input type="radio" name="style" checked class="size-4 appearance-none rounded-full border border-[#888] bg-white checked:bg-[radial-gradient(#808080_3px,#fff_3.5px)]">Lines</label>
        </div>
      </fieldset>
    </div>
    <div class="mt-1.5 grid grid-cols-[45px_116px_52px_50px] items-center gap-1">
      <label for="size" class="pt-0.5">Size:</label>
      <input id="size" value="2.54" class="h-[26px] min-w-0 border border-[#888] bg-white pt-0.5 pl-[10px]">
      <div class="relative h-[26px]">
        <select aria-label="Size unit" class="h-full w-full appearance-none border border-[#888] bg-white pt-0.5 pl-1"><option>mm</option></select>
        <svg class="pointer-events-none absolute top-[11px] right-1.5 h-[5px] w-1.5"><use href="#arrow"/></svg>
      </div>
      <button type="button" class="h-[26px] rounded border border-[#777] bg-white pt-0.5">Finest</button>
      <label for="multiple" class="pt-0.5 whitespace-nowrap">Multiple:</label>
      <input id="multiple" value="1" class="h-[26px] min-w-0 border border-[#888] bg-white pt-0.5 pl-[10px]">
      <span class="col-span-2"></span>
      <span class="self-start pt-1.5">Hint:</span>
      <p class="col-span-3 h-[38px] pt-px leading-[14px]">It's strongly recommended to use the<br>default grid in schematics.</p>
      <label for="alt" class="pt-0.5">Alt:</label>
      <input id="alt" value="0.254" class="h-[26px] min-w-0 border border-[#888] bg-white pt-0.5 pl-[10px]">
      <div class="relative h-[26px]">
        <select aria-label="Alternative unit" class="h-full w-full appearance-none border border-[#0696d7] bg-white pt-0.5 pl-1"><option>mm</option></select>
        <svg class="pointer-events-none absolute top-[11px] right-1.5 h-[5px] w-1.5"><use href="#arrow"/></svg>
      </div>
      <button type="button" class="h-[26px] rounded border border-[#777] bg-white pt-0.5">Finest</button>
    </div>
    <div class="-mx-[3px] mt-[19px] flex items-center gap-1.5">
      <button type="button" class="mr-auto h-[26px] w-[78px] rounded border border-[#777] bg-white pt-0.5">Default</button>
      <button type="button" class="h-7 w-20 rounded border-2 border-[#0696d7] bg-white pt-0.5">OK</button>
      <button type="button" class="h-[26px] w-[78px] rounded border border-[#777] bg-white pt-0.5">Cancel</button>
    </div>
  </form>
</div>
</body>
</html>
